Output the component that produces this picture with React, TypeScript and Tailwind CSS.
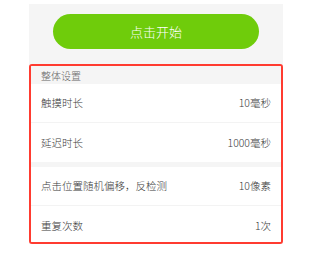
import React from "react";

const font = { fontFamily: '"Noto Sans CJK SC", "Noto Sans", sans-serif' };

function Row({ label, value, h, border, extra }: { label: string; value: string; h: string; border?: boolean; extra?: string }) {
  return (
    <div
      className={`flex items-center justify-between bg-white pl-[10px] pr-[10px] ${h} ${border ? "border-b border-[#f3f3f3]" : ""} ${extra ?? ""}`}
    >
      <span className="text-[10.5px] font-light text-[#3a3a3a]">{label}</span>
      <span className="text-[10.5px] font-light text-[#3a3a3a]">{value}</span>
    </div>
  );
}

export default function App() {
  return (
    <div className="w-[321px] h-[257px] bg-white overflow-hidden" style={font}>
      <div className="ml-[29px] mt-[4px] w-[254px] bg-[#f5f5f5]">
        <div className="pt-[10px] pb-[15px] flex justify-center">
          <button className="w-[206px] h-[35px] rounded-full bg-[#6fcc0b] text-white text-[13px] font-light flex items-center justify-center">
            点击开始
          </button>
        </div>
        <div className="border-2 border-[#ff3b30] rounded-[3px] overflow-hidden">
          <div className="h-[18px] flex items-center pl-[10px] bg-[#f5f5f5] text-[10px] font-light text-[#666]">
            整体设置
          </div>
          <Row label="触摸时长" value="10毫秒" h="h-[39px]" border />
          <Row label="延迟时长" value="1000毫秒" h="h-[39px]" />
          <div className="h-[5px] bg-[#f5f5f5]" />
          <Row label="点击位置随机偏移，反检测" value="10像素" h="h-[39px]" border />
          <Row label="重复次数" value="1次" h="h-[36px]" extra="pt-[3px]" />
        </div>
      </div>
    </div>
  );
}
